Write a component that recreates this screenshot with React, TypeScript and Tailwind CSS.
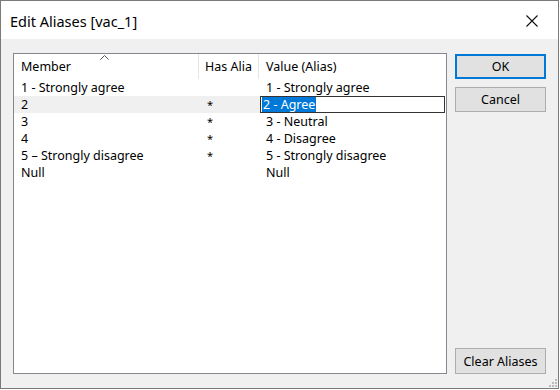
import React from "react";

const rows = [
  { m: "1 - Strongly agree", a: "", v: "1 - Strongly agree" },
  { m: "2", a: "*", v: "2 - Agree", edit: true },
  { m: "3", a: "*", v: "3 - Neutral" },
  { m: "4", a: "*", v: "4 - Disagree" },
  { m: "5 \u2013 Strongly disagree", a: "*", v: "5 - Strongly disagree" },
  { m: "Null", a: "", v: "Null" },
];

export default function App() {
  return (
    <div
      className="w-[560px] h-[390px] bg-white text-[#000]"
      style={{ fontFamily: '"Noto Sans", "Open Sans", sans-serif' }}
    >
      <div className="w-[559px] h-[389px] border border-[#7a7a7a] flex flex-col bg-[#f0f0f0]">
        {/* title bar */}
        <div className="h-[38px] bg-white flex items-center justify-between pl-[9px] pr-[20px]">
          <span className="text-[14.5px] leading-none mt-[3px]">Edit Aliases [vac_1]</span>
          <svg width="12" height="12" viewBox="0 0 12 12" className="mt-[1px]">
            <path d="M0.5 0.5 L11.5 11.5 M11.5 0.5 L0.5 11.5" stroke="#111" strokeWidth="1.1" />
          </svg>
        </div>
        {/* body */}
        <div className="flex-1 flex pl-[12px] pt-[14px] pb-[13px] relative">
          <div className="w-[434px] h-[321px] bg-white border border-[#828790] flex flex-col text-[12.5px]">
            {/* header */}
            <div className="h-[25px] flex items-stretch relative">
              <div className="w-[185px] flex items-center pl-[7px] pt-[2px] border-r border-[#e5e5e5]">Member</div>
              <div className="w-[60px] flex items-center pl-[6px] pt-[2px] border-r border-[#e5e5e5] overflow-hidden whitespace-nowrap">Has Alia</div>
              <div className="flex-1 flex items-center pl-[7px] pt-[2px]">Value (Alias)</div>
              <svg width="9" height="5" viewBox="0 0 9 5" className="absolute left-[86px] top-[1px]">
                <path d="M0.5 4.5 L4.5 0.5 L8.5 4.5" stroke="#555" strokeWidth="1" fill="none" />
              </svg>
            </div>
            {rows.map((r, i) => (
              <div key={i} className="h-[17px] flex items-center leading-none">
                <div className={`w-[246px] h-full flex items-center pt-[2px] ${r.edit ? "bg-[#f0f0f0]" : ""}`}>
                  <div className="w-[185px] pl-[7px] whitespace-nowrap">{r.m}</div>
                  <div className="w-[61px] pl-[8px] text-[11px] -mt-[2px]">{r.a}</div>
                </div>
                {r.edit ? (
                  <div className="w-[185px] h-full border border-[#333] flex items-center pl-[1px]">
                    <span className="bg-[#0078d7] text-white h-[15px] flex items-center px-[1px] pt-[1px]">{r.v}</span>
                  </div>
                ) : (
                  <div className="flex-1 pl-[6px] pt-[2px] whitespace-nowrap">{r.v}</div>
                )}
              </div>
            ))}
          </div>
          {/* buttons */}
          <div className="ml-[8px] w-[91px] flex flex-col text-[12.5px]">
            <div className="mt-[1px] h-[25px] border-2 border-[#0078d7] bg-[#e1e1e1] flex items-center justify-center pt-[2px]">OK</div>
            <div className="mt-[8px] h-[25px] border border-[#adadad] bg-[#e1e1e1] flex items-center justify-center pt-[2px]">Cancel</div>
            <div className="mt-auto mb-[1px] h-[26px] border border-[#adadad] bg-[#e1e1e1] flex items-center justify-center pt-[2px]">Clear Aliases</div>
          </div>
          {/* resize grip */}
          <svg width="8" height="8" viewBox="0 0 8 8" className="absolute right-[1px] bottom-[1px]">
            {[
              [6, 0], [6, 3], [3, 3], [6, 6], [3, 6], [0, 6],
            ].map(([x, y], k) => (
              <rect key={k} x={x} y={y} width="2" height="2" fill="#bcbcbc" />
            ))}
          </svg>
        </div>
      </div>
    </div>
  );
}
